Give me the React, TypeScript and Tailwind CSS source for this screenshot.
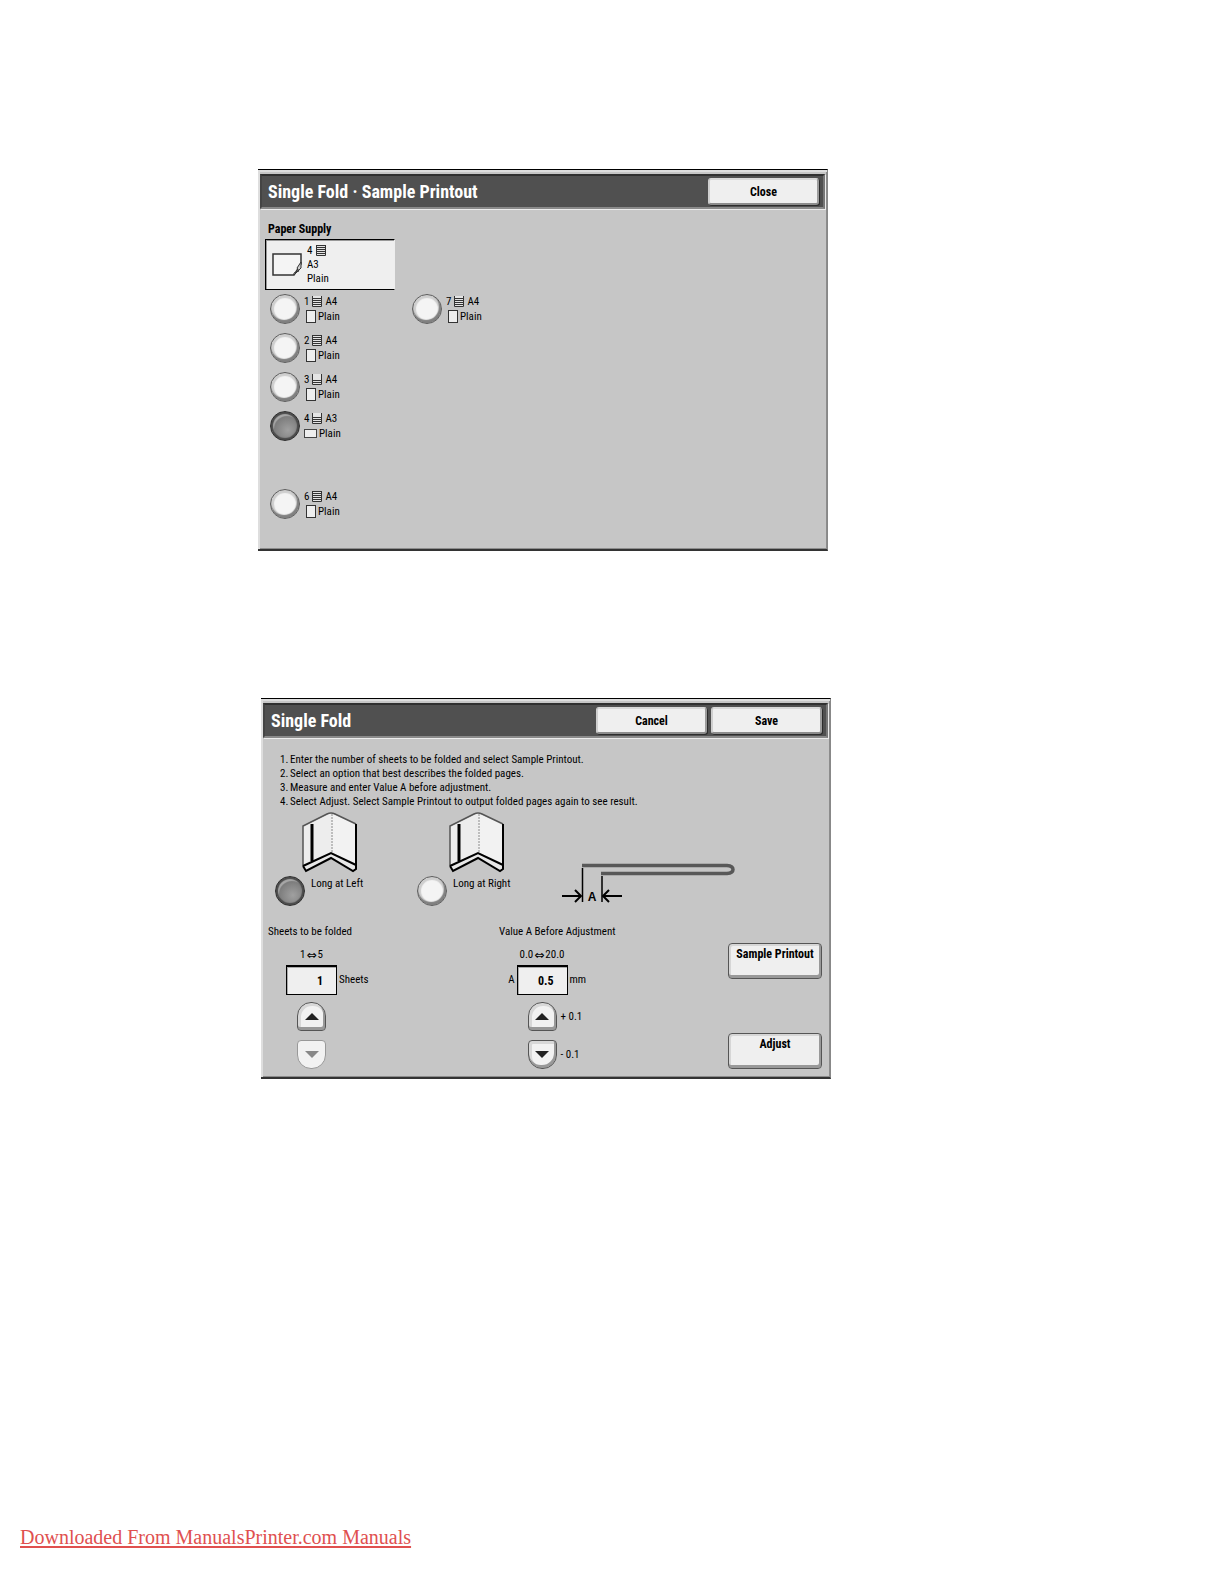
import { useState } from "react";
import type { ReactNode } from "react";

interface Tray {
  id: string;
  size: string;
  type: string;
  lines: number;
  landscape?: boolean;
}

// null keeps the slot of a tray that is not installed
const leftTrays: (Tray | null)[] = [
  { id: "1", size: "A4", type: "Plain", lines: 4 },
  { id: "2", size: "A4", type: "Plain", lines: 5 },
  { id: "3", size: "A4", type: "Plain", lines: 2 },
  { id: "4", size: "A3", type: "Plain", lines: 3, landscape: true },
  null,
  { id: "6", size: "A4", type: "Plain", lines: 5 },
];

const rightTrays: (Tray | null)[] = [{ id: "7", size: "A4", type: "Plain", lines: 4 }];

const steps = [
  "Enter the number of sheets to be folded and select Sample Printout.",
  "Select an option that best describes the folded pages.",
  "Measure and enter Value A before adjustment.",
  "Select Adjust. Select Sample Printout to output folded pages again to see result.",
];

const radioClass =
  "size-[30px] shrink-0 appearance-none rounded-full border border-[#5c5c5c] bg-[#f4f4f4] shadow-[inset_-1px_-2px_1px_1px_#808080,inset_0_0_1px_3px_#cecece] checked:border-[#2c2c2c] checked:bg-[radial-gradient(circle_at_60%_65%,#a0a0a0_0%,#808080_50%,#666_75%)] checked:shadow-[inset_0_0_1px_2px_#4a4a4a,inset_2px_3px_1px_1px_#aaa]";

function Panel({ title, actions, children }: { title: string; actions: string[]; children: ReactNode }) {
  return (
    <section className="w-full max-w-[570px] border-t border-r border-b-2 border-t-black border-r-[#888] border-b-[#333] bg-[#c6c6c6] px-[2px] pt-1 shadow-[inset_2px_2px_0_#dedede,inset_-1px_-1px_0_#8c8c8c]">
      <header className="flex h-[35px] items-center justify-between border-2 border-t-[#303030] border-r-[#777] border-b-[#8a8a8a] border-l-[#444] bg-[#505050] pr-1 pl-[6px] shadow-[1px_1px_0_#ececec]">
        <h2 className="text-[18px] leading-6 font-bold text-white">{title}</h2>
        <div className="flex gap-1">
          {actions.map((action) => (
            <button
              key={action}
              className="h-[27px] w-[111px] rounded-[3px] border-2 border-t-[#d8d8d8] border-r-[#9c9c9c] border-b-[#8c8c8c] border-l-[#cfcfcf] bg-[#efefef] text-[12px] leading-4 font-bold shadow-[1px_1px_0_#2c2c2c]"
            >
              {action}
            </button>
          ))}
        </div>
      </header>
      {children}
    </section>
  );
}

function LevelIcon({ lines }: { lines: number }) {
  return (
    <svg width="10" height="11" viewBox="0 0 10 11" aria-hidden="true">
      <rect x="0" y="0" width="10" height="11" fill="#e4e4e4" />
      <path d="M0.5 0V10.5H9.5V0" fill="none" stroke="#333" />
      {[8, 6, 4, 2, 0].slice(0, lines).map((y) => (
        <rect key={y} x="1" y={y} width="8" height="1" fill="#333" />
      ))}
    </svg>
  );
}

function TrayOption({ tray, checked, onSelect }: { tray: Tray; checked: boolean; onSelect: () => void }) {
  return (
    <label className="flex h-[30px] items-center gap-1">
      <input type="radio" name="tray" className={radioClass} checked={checked} onChange={onSelect} />
      <span className="flex flex-col text-[11px] leading-[15px]">
        <span className="flex items-center gap-[3px]">
          {tray.id} <LevelIcon lines={tray.lines} /> {tray.size}
        </span>
        <span className="flex items-center gap-[2px]">
          {tray.landscape ? (
            <span className="h-[9px] w-[13px] border border-[#444] bg-[#eee]" />
          ) : (
            <span className="ml-[2px] h-[13px] w-[10px] border border-[#333] bg-[#eee]" />
          )}
          {tray.type}
        </span>
      </span>
    </label>
  );
}

function BookIcon() {
  return (
    <svg width="56" height="61" viewBox="0 0 56 61" className="mr-[5px]" aria-hidden="true">
      <path d="M1 15 L29 1 L54 12 V54 L49 59 L29 46 L3 59 L1 55 Z" fill="#f2f2f2" />
      <path d="M1 15 V54 L29 41 V1 Z" fill="#ededed" />
      <path d="M1 54 V14 L25 2 Q29 0 33 2 L54 12" fill="none" stroke="#555" strokeWidth="1.5" />
      <path d="M54 12 V53" stroke="#000" strokeWidth="2" />
      <path d="M1 54 L29 41 L54 53 V57 L51 59 L29 46 L4 59 L1 54" fill="#e8e8e8" stroke="#000" strokeWidth="2" />
      <path d="M10 12 V49" stroke="#000" strokeWidth="3" />
      <path d="M30 2 V40" stroke="#888" strokeDasharray="2 1" />
    </svg>
  );
}

function FoldDiagram() {
  return (
    <svg width="174" height="42" viewBox="0 0 174 42" aria-hidden="true">
      <path d="M20 4.5 H165 Q171 5 171 8.500 Q171 12 165 12.500 H39" fill="none" stroke="#585858" strokeWidth="3.500" />
      <path d="M20.500 7 V41 M40 15 V41" stroke="#000" strokeWidth="1.500" />
      <path d="M0 35 H19 M13 29 L19 35 L13 41 M60 35 H41 M47 29 L41 35 L47 41" fill="none" stroke="#000" strokeWidth="2" />
      <text x="30" y="40" textAnchor="middle" fontSize="12" fontWeight="bold" fontFamily="Liberation Sans, sans-serif">
        A
      </text>
    </svg>
  );
}

function Range({ from, to }: { from: string; to: string }) {
  return (
    <p className="flex items-center gap-px">
      {from}
      <span className="font-['DejaVu_Sans',sans-serif] text-[12px]">⇔</span>
      {to}
    </p>
  );
}

function StepButton({ down, disabled, label, onClick }: { down?: boolean; disabled?: boolean; label: string; onClick: () => void }) {
  return (
    <button
      aria-label={label}
      disabled={disabled}
      onClick={onClick}
      className={`flex size-[29px] shrink-0 items-center justify-center border border-[#555] bg-[#f2f2f2] shadow-[inset_-1px_-2px_0_1px_#999,inset_1px_1px_0_2px_#d8d8d8] disabled:border-[#999] disabled:shadow-none ${
        down ? "rounded-t-[4px] rounded-b-[14px]" : "rounded-t-[14px] rounded-b-[4px]"
      }`}
    >
      <svg width="14" height="7" viewBox="0 0 14 7" fill={disabled ? "#888" : "#222"} aria-hidden="true">
        <path d={down ? "M0 0 H14 L7 7 Z" : "M0 7 H14 L7 0 Z"} />
      </svg>
    </button>
  );
}

const valueClass =
  "h-[30px] w-[51px] shrink-0 border border-t-2 border-black bg-[#efefef] pr-[13px] text-right text-[12px] font-bold shadow-[inset_1px_1px_0_#aaa]";

const actionClass =
  "flex h-[36px] w-full justify-center rounded-[4px] border border-[#555] bg-[#efefef] pt-[2px] text-[12px] leading-4 font-bold shadow-[inset_-1px_-2px_0_1px_#999,inset_1px_1px_0_1px_#d6d6d6]";

export default function App() {
  const [tray, setTray] = useState("4");
  const [side, setSide] = useState("Long at Left");
  const [sheets, setSheets] = useState(1);
  const [valueA, setValueA] = useState(0.5);

  return (
    <div className="flex min-h-screen flex-col bg-white font-['Liberation_Sans_Narrow','Arial_Narrow','Roboto_Condensed',sans-serif] text-black">
      <main className="flex flex-col gap-[147px] pt-[169px] pl-[258px]">
        <Panel title="Single Fold · Sample Printout" actions={["Close"]}>
          <div className="px-[5px] pt-3 pb-[30px]">
            <h3 className="pl-[3px] text-[12px] leading-4 font-bold">Paper Supply</h3>
            <div className="mt-[2px] flex h-[51px] w-[130px] items-center gap-1 border border-r-[#eee] border-black bg-[#efefef] pl-[6px] shadow-[inset_1px_1px_0_#999]">
              <svg width="31" height="24" viewBox="0 0 31 24" aria-hidden="true">
                <path d="M1 1 H29 V11 L22 22 H1 Z" fill="#f4f4f4" stroke="#333" strokeWidth="1.500" />
                <path d="M29 9 L25 15 L27 18 L22 20 V22 L29 15 Z" fill="#ccc" stroke="#333" />
              </svg>
              <div className="text-[11px] leading-[14px]">
                <p className="flex items-center gap-1">
                  4 <LevelIcon lines={5} />
                </p>
                <p>A3</p>
                <p>Plain</p>
              </div>
            </div>
            <div className="mt-1 flex pl-[5px]">
              {[leftTrays, rightTrays].map((column, c) => (
                <div key={c} className="flex w-[142px] flex-col gap-[9px]">
                  {column.map((item, i) =>
                    item ? (
                      <TrayOption key={i} tray={item} checked={tray === item.id} onSelect={() => setTray(item.id)} />
                    ) : (
                      <div key={i} className="h-[30px]" />
                    )
                  )}
                </div>
              ))}
            </div>
          </div>
        </Panel>

        <div className="pl-[3px]">
          <Panel title="Single Fold" actions={["Cancel", "Save"]}>
            <div className="px-[5px] pt-[15px] pb-2 text-[11px] leading-4">
              <ol className="pl-3 leading-[14px]">
                {steps.map((step, i) => (
                  <li key={step} className="flex">
                    <span className="w-[10px]">{i + 1}.</span>
                    {step}
                  </li>
                ))}
              </ol>
              <div className="mt-[3px] flex items-start pl-[7px]">
                {["Long at Left", "Long at Right"].map((name) => (
                  <div key={name} className="w-[142px]">
                    <label className="flex w-fit flex-col items-end">
                      <BookIcon />
                      <span className="mt-[3px] flex gap-[6px]">
                        <input
                          type="radio"
                          name="side"
                          className={radioClass}
                          checked={side === name}
                          onChange={() => setSide(name)}
                        />
                        {name}
                      </span>
                    </label>
                  </div>
                ))}
                <div className="mt-[49px] pl-[3px]">
                  <FoldDiagram />
                </div>
              </div>

              <div className="mt-[18px] flex">
                <div className="w-[231px]">
                  <h3>Sheets to be folded</h3>
                  <div className="mt-[7px] ml-[18px] flex w-[51px] flex-col items-center">
                    <Range from="1" to="5" />
                    <label className="mt-[2px] flex w-[51px] items-center gap-[2px]">
                      <input className={valueClass} value={sheets} readOnly />
                      Sheets
                    </label>
                    <div className="mt-[7px] flex flex-col gap-[9px]">
                      <StepButton label="More sheets" onClick={() => setSheets(Math.min(5, sheets + 1))} />
                      <StepButton down disabled={sheets === 1} label="Fewer sheets" onClick={() => setSheets(sheets - 1)} />
                    </div>
                  </div>
                </div>
                <div className="flex-1">
                  <h3>Value A Before Adjustment</h3>
                  <div className="mt-[7px] flex w-[86px] flex-col items-center">
                    <Range from="0.0" to="20.0" />
                    <label className="mt-[2px] flex items-center gap-[2px]">
                      <span className="w-4 text-right">A</span>
                      <input className={valueClass} value={valueA.toFixed(1)} readOnly />
                      <span className="w-4">mm</span>
                    </label>
                    <div className="mt-[7px] flex w-[29px] flex-col gap-[9px]">
                      <div className="flex items-center gap-1 whitespace-nowrap">
                        <StepButton label="Increase value A" onClick={() => setValueA(Math.min(20, valueA + 0.1))} />
                        + 0.1
                      </div>
                      <div className="flex items-center gap-1 whitespace-nowrap">
                        <StepButton down label="Decrease value A" onClick={() => setValueA(Math.max(0, valueA - 0.1))} />
                        - 0.1
                      </div>
                    </div>
                  </div>
                </div>
                <div className="mr-px flex w-[94px] flex-col justify-between pt-[19px]">
                  <button className={actionClass}>Sample Printout</button>
                  <button className={actionClass}>Adjust</button>
                </div>
              </div>
            </div>
          </Panel>
        </div>
      </main>
      <footer className="mt-auto pb-[33px] pl-5">
        <a
          href="#manuals"
          className="font-['Liberation_Serif',serif] text-[20px] leading-6 text-[#e0504f] underline underline-offset-2"
        >
          Downloaded From ManualsPrinter.com Manuals
        </a>
      </footer>
    </div>
  );
}
